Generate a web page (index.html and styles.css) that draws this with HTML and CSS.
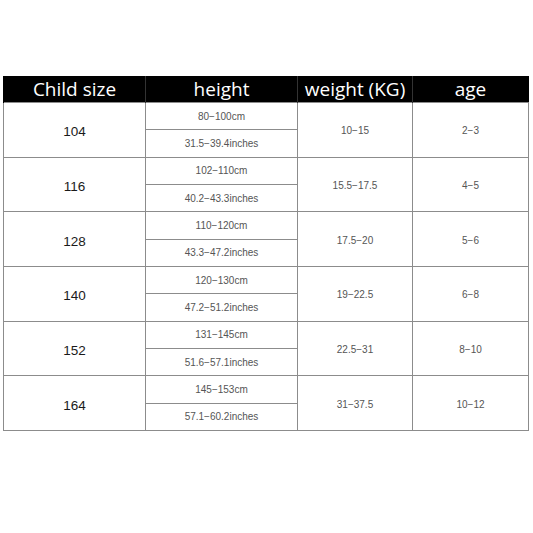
FILE: index.html
```html
<!DOCTYPE html>
<html>
<head>
<meta charset="utf-8">
<link rel="stylesheet" href="styles.css">
</head>
<body>
<div class="chart">
  <div class="head">
    <div class="hcell">Child size</div>
    <div class="hcell">height</div>
    <div class="hcell">weight (KG)</div>
    <div class="hcell">age</div>
  </div>
  <div class="body">
    <div class="cell size span2">104</div>
    <div class="cell sub">80−100cm</div>
    <div class="cell val span2">10−15</div>
    <div class="cell val span2">2−3</div>
    <div class="cell sub">31.5−39.4inches</div>

    <div class="cell size span2">116</div>
    <div class="cell sub">102−110cm</div>
    <div class="cell val span2">15.5−17.5</div>
    <div class="cell val span2">4−5</div>
    <div class="cell sub">40.2−43.3inches</div>

    <div class="cell size span2">128</div>
    <div class="cell sub">110−120cm</div>
    <div class="cell val span2">17.5−20</div>
    <div class="cell val span2">5−6</div>
    <div class="cell sub">43.3−47.2inches</div>

    <div class="cell size span2">140</div>
    <div class="cell sub">120−130cm</div>
    <div class="cell val span2">19−22.5</div>
    <div class="cell val span2">6−8</div>
    <div class="cell sub">47.2−51.2inches</div>

    <div class="cell size span2">152</div>
    <div class="cell sub">131−145cm</div>
    <div class="cell val span2">22.5−31</div>
    <div class="cell val span2">8−10</div>
    <div class="cell sub">51.6−57.1inches</div>

    <div class="cell size span2">164</div>
    <div class="cell sub">145−153cm</div>
    <div class="cell val span2">31−37.5</div>
    <div class="cell val span2">10−12</div>
    <div class="cell sub">57.1−60.2inches</div>
  </div>
</div>
</body>
</html>
```
FILE: styles.css
```css
html, body {
  margin: 0;
  padding: 0;
  background: #fff;
}
.chart {
  margin: 76px 0 0 3px;
  width: 526px;
}
.head {
  display: grid;
  grid-template-columns: 142px 152px 115px 116px;
  height: 26px;
  background: #000;
  border-right: 1px solid #000;
}
.hcell {
  color: #fff;
  font-family: "Open Sans", sans-serif;
  font-size: 19px;
  line-height: 27px;
  text-align: center;
  border-left: 1px solid #333;
}
.hcell:first-child {
  border-left: 1px solid #000;
}
.body {
  display: grid;
  grid-template-columns: 141px 151px 114px 115px;
  grid-template-rows: repeat(12, 1fr);
  gap: 1px;
  height: 327px;
  background: #8c8c8c;
  border: 1px solid #8c8c8c;
}
.cell {
  background: #fff;
  display: flex;
  align-items: center;
  justify-content: center;
  font-family: "Liberation Sans", Arial, sans-serif;
}
.span2 {
  grid-row: span 2;
}
.size {
  font-size: 13.5px;
  color: #1a1a1a;
  padding-top: 4px;
}
.sub {
  font-size: 10px;
  color: #555;
}
.val {
  font-size: 10px;
  color: #555;
  padding-top: 2px;
}
```
